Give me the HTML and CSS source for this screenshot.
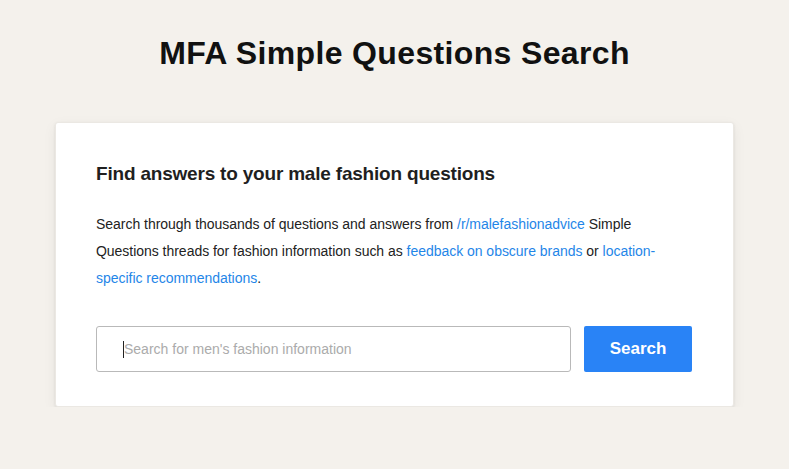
FILE: index.html
```html
<!DOCTYPE html>
<html lang="en">
<head>
<meta charset="utf-8">
<title>MFA Simple Questions Search</title>
<link rel="stylesheet" href="styles.css">
</head>
<body>
<main class="page">
  <h1 class="title">MFA Simple Questions Search</h1>
  <section class="card">
    <h2 class="card-title">Find answers to your male fashion questions</h2>
    <p class="intro">Search through thousands of questions and answers from <a href="#">/r/malefashionadvice</a> Simple Questions threads for fashion information such as <a href="#">feedback on obscure brands</a> or <a href="#">location-specific recommendations</a>.</p>
    <form class="search">
      <div class="field"><span class="caret"></span><input class="input" type="text" placeholder="Search for men's fashion information"></div>
      <button class="btn" type="button">Search</button>
    </form>
  </section>
</main>
</body>
</html>
```
FILE: styles.css
```css
* { box-sizing: border-box; }
html, body { margin: 0; padding: 0; }
body {
  background: #f4f1ec;
  font-family: "Liberation Sans", Arial, sans-serif;
  color: #1a1a1a;
}
.page {
  display: flex;
  flex-direction: column;
  align-items: center;
  padding-top: 33px;
}
.title {
  margin: 0;
  font-size: 32px;
  line-height: 40px;
  font-weight: 700;
  color: #111;
  letter-spacing: 0.35px;
}
.card {
  margin-top: 49px;
  width: 679px;
  background: #fff;
  border: 1px solid #ebe8e3;
  border-radius: 3px;
  box-shadow: 0 1px 3px rgba(0,0,0,0.08), 0 4px 14px rgba(0,0,0,0.06);
  padding: 38px 41px 34px 40px;
}
.card-title {
  margin: 0;
  font-size: 19px;
  line-height: 26px;
  font-weight: 700;
  color: #1f1f1f;
  letter-spacing: -0.2px;
}
.intro {
  margin: 24px 0 0;
  font-size: 14px;
  line-height: 27px;
  color: #222;
  letter-spacing: -0.03px;
}
.intro a { color: #1f86e8; text-decoration: none; }
.search {
  display: flex;
  gap: 13px;
  margin-top: 34px;
}
.field {
  position: relative;
  flex: 1;
}
.input {
  width: 100%;
  height: 46px;
  border: 1px solid #b9b9b9;
  border-radius: 3px;
  padding: 0 27px;
  font-family: "Liberation Sans", Arial, sans-serif;
  font-size: 14px;
  color: #222;
  background: #fff;
  outline: none;
}
.input::placeholder { color: #ababab; }
.caret {
  position: absolute;
  left: 27px;
  top: 15px;
  width: 1px;
  height: 17px;
  background: #222;
}
.btn {
  width: 108px;
  height: 46px;
  border: none;
  border-radius: 2px;
  background: #2983f6;
  color: #fff;
  font-family: "Liberation Sans", Arial, sans-serif;
  font-size: 17px;
  font-weight: 700;
}
```
